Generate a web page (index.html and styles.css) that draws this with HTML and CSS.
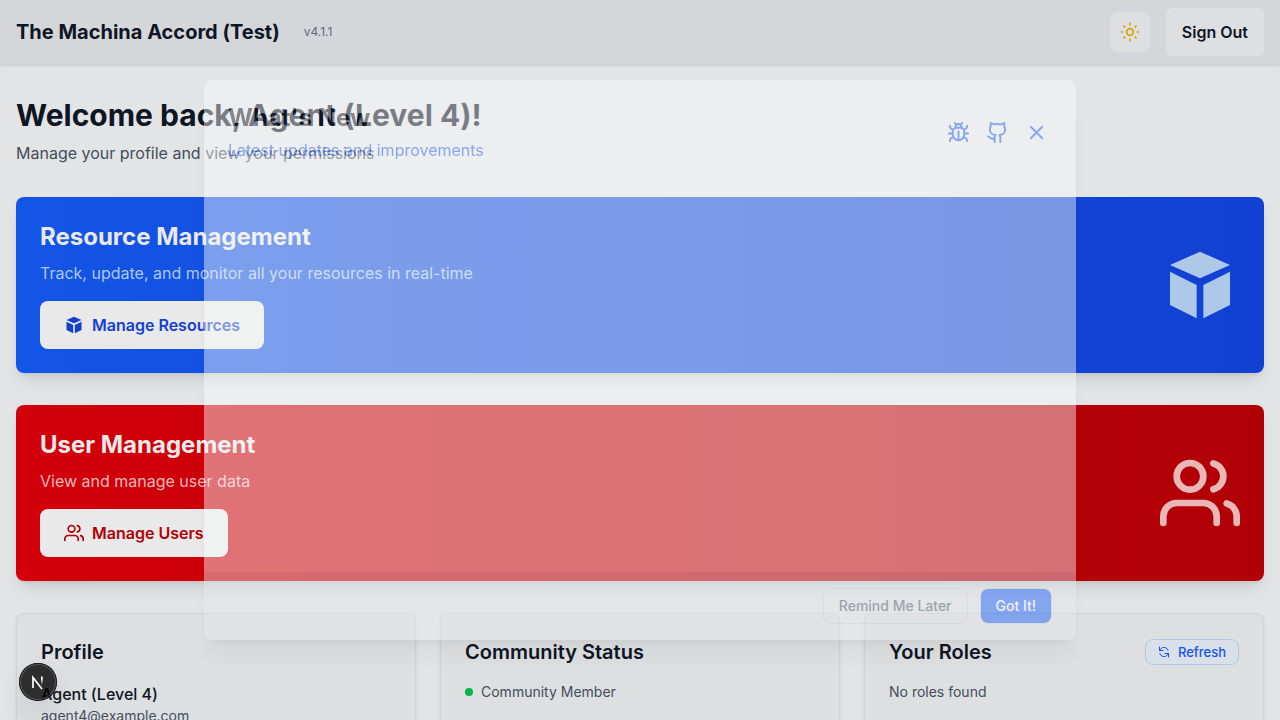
FILE: index.html
```html
<!DOCTYPE html>
<html lang="en">
<head>
<meta charset="utf-8">
<meta name="viewport" content="width=device-width, initial-scale=1">
<title>The Machina Accord (Test)</title>
<link rel="stylesheet" href="styles.css">
</head>
<body>
<header class="topbar">
  <div class="brand">
    <span class="brand-name">The Machina Accord (Test)</span>
    <span class="version">v4.1.1</span>
  </div>
  <div class="topbar-actions">
    <button class="theme-toggle" type="button" aria-label="Toggle theme">
      <svg width="20" height="20" viewBox="0 0 24 24" fill="none" stroke="currentColor" stroke-width="2"><circle cx="12" cy="12" r="4"/><path d="M12 1v3M12 20v3M1 12h3M20 12h3M4.2 4.2l2.2 2.2M17.6 17.6l2.2 2.2M4.2 19.8l2.2-2.2M17.6 6.4l2.2-2.2"/></svg>
    </button>
    <button class="sign-out" type="button">Sign Out</button>
  </div>
</header>

<main class="page">
  <section class="welcome">
    <h1>Welcome back, Agent (Level 4)!</h1>
    <p>Manage your profile and view your permissions</p>
  </section>

  <section class="banner banner-blue">
    <div>
      <h2>Resource Management</h2>
      <p>Track, update, and monitor all your resources in real-time</p>
      <button class="banner-button" type="button">
        <svg width="20" height="20" viewBox="0 0 24 24" fill="currentColor"><path d="M12 2L21 6L12 10L3 6ZM3 8L11 12V22L3 18ZM21 8L13 12V22L21 18Z"/></svg>
        Manage Resources
      </button>
    </div>
    <svg class="banner-icon" viewBox="0 0 24 24" fill="currentColor"><path d="M12 2L21 6L12 10L3 6ZM3 8L11 12V22L3 18ZM21 8L13 12V22L21 18Z"/></svg>
  </section>

  <section class="banner banner-red">
    <div>
      <h2>User Management</h2>
      <p>View and manage user data</p>
      <button class="banner-button" type="button">
        <svg class="line-icon" width="20" height="20" viewBox="0 0 24 24"><path d="M17 21v-2a4 4 0 0 0-4-4H5a4 4 0 0 0-4 4v2"/><circle cx="9" cy="7" r="4"/><path d="M23 21v-2a4 4 0 0 0-3-3.87M16 3.13a4 4 0 0 1 0 7.75"/></svg>
        Manage Users
      </button>
    </div>
    <svg class="banner-icon line-icon" viewBox="0 0 24 24"><path d="M17 21v-2a4 4 0 0 0-4-4H5a4 4 0 0 0-4 4v2"/><circle cx="9" cy="7" r="4"/><path d="M23 21v-2a4 4 0 0 0-3-3.87M16 3.13a4 4 0 0 1 0 7.75"/></svg>
  </section>

  <div class="cards">
    <section class="card">
      <div class="card-head"><h3>Profile</h3></div>
      <p class="profile-name">Agent (Level 4)</p>
      <p class="card-text">agent4@example.com</p>
    </section>
    <section class="card">
      <div class="card-head"><h3>Community Status</h3></div>
      <p class="card-text status"><span class="status-dot"></span>Community Member</p>
    </section>
    <section class="card">
      <div class="card-head">
        <h3>Your Roles</h3>
        <button class="refresh" type="button">
          <svg class="line-icon" width="12" height="12" viewBox="0 0 24 24"><path d="M3 2v7h7M21 22v-7h-7M20.500 9A9 9 0 0 0 5 6L3 9M3.500 15A9 9 0 0 0 19 18l2-3"/></svg>
          Refresh
        </button>
      </div>
      <p class="card-text">No roles found</p>
    </section>
  </div>
</main>

<div class="backdrop"></div>
<div class="modal-layer">
  <div class="modal" role="dialog" aria-labelledby="news-title">
    <header class="modal-head">
      <div>
        <h2 id="news-title">What's New</h2>
        <p>Latest updates and improvements</p>
      </div>
      <div class="modal-tools">
        <button type="button" aria-label="Report a bug"><svg class="line-icon" width="23" height="23" viewBox="0 0 24 24"><path d="m8 2 1.880 1.880M14.120 3.880 16 2M9 7.130v-1a3 3 0 1 1 6 0v1M12 20a6 6 0 0 1-6-6v-3a4 4 0 0 1 4-4h4a4 4 0 0 1 4 4v3a6 6 0 0 1-6 6M12 20v-9M6.530 9C4.600 8.800 3 7.100 3 5M6 13H2M3 21c0-2.100 1.700-3.900 3.800-4M20.970 5c0 2.100-1.600 3.800-3.500 4M22 13h-4M17.200 17c2.100.1 3.800 1.900 3.800 4"/></svg></button>
        <button type="button" aria-label="GitHub"><svg class="line-icon" width="23" height="23" viewBox="0 0 24 24"><path d="M15 22v-4a4.800 4.800 0 0 0-1-3.500c3 0 6-2 6-5.500.08-1.250-.27-2.480-1-3.500.28-1.150.28-2.350 0-3.500 0 0-1 0-3 1.500-2.640-.5-5.360-.5-8 0C6 2 5 2 5 2c-.3 1.150-.3 2.350 0 3.500A5.400 5.400 0 0 0 4 9c0 3.500 3 5.500 6 5.500-.39.490-.68 1.050-.85 1.650S8.930 17.380 9 18v4M9 18c-4.510 2-5-2-7-2"/></svg></button>
        <button type="button" aria-label="Close"><svg class="line-icon" width="23" height="23" viewBox="0 0 24 24"><path d="M18 6 6 18M6 6l12 12"/></svg></button>
      </div>
    </header>
    <div class="modal-body"></div>
    <footer class="modal-foot">
      <button class="later" type="button">Remind Me Later</button>
      <button class="got-it" type="button">Got It!</button>
    </footer>
  </div>
</div>

<button class="dev-badge" type="button" aria-label="Open developer tools">
  <svg width="38" height="38" viewBox="0 0 38 38" fill="none"><defs><linearGradient id="fade" x1="0" y1="0" x2="0" y2="1"><stop offset="0.3" stop-color="#fff"/><stop offset="1" stop-color="#fff" stop-opacity="0"/></linearGradient></defs><path d="M14 25V14.500L23 26" stroke="#fff" stroke-width="1.700"/><rect x="22" y="13.500" width="1.700" height="8.500" fill="url(#fade)"/></svg>
</button>
</body>
</html>
```
FILE: styles.css
```css
* {
  box-sizing: border-box;
  margin: 0;
}

body {
  min-height: 100vh;
  overflow: hidden;
  background: #f9fafb;
  color: #101828;
  font: 16px/24px Inter, sans-serif;
  text-rendering: optimizeSpeed;
}

button {
  border: 0;
  padding: 0;
  font: inherit;
  color: inherit;
  text-rendering: inherit;
  cursor: pointer;
}

svg {
  display: block;
}

.line-icon {
  fill: none;
  stroke: currentColor;
  stroke-width: 2;
  stroke-linecap: round;
  stroke-linejoin: round;
}

.topbar {
  display: flex;
  align-items: center;
  justify-content: space-between;
  padding: 8px 16px;
  background: #e9ebef;
  border-bottom: 1px solid #e5e7eb;
  box-shadow: 0 1px 3px rgba(0, 0, 0, 0.1);
}

.brand,
.topbar-actions {
  display: flex;
  align-items: center;
}

.brand {
  gap: 24px;
}

.brand-name {
  font-size: 20px;
  line-height: 28px;
  font-weight: 700;
}

.version {
  font-size: 12px;
  line-height: 16px;
  color: #6a7282;
}

.topbar-actions {
  gap: 16px;
}

.theme-toggle {
  display: grid;
  place-items: center;
  width: 40px;
  height: 40px;
  border-radius: 8px;
  background: #f3f4f6;
  color: #efb100;
}

.sign-out {
  padding: 12px 16px;
  border-radius: 6px;
  background: #f3f4f6;
  font-weight: 600;
}

.page {
  padding: 32px 16px;
}

.welcome {
  margin-bottom: 32px;
}

.welcome h1 {
  margin-bottom: 8px;
  font-size: 30px;
  line-height: 36px;
}

.welcome p {
  color: #4a5565;
}

.banner {
  display: flex;
  align-items: center;
  justify-content: space-between;
  margin-bottom: 32px;
  padding: 24px;
  border-radius: 8px;
  box-shadow: 0 10px 15px -3px rgba(0, 0, 0, 0.1), 0 4px 6px -4px rgba(0, 0, 0, 0.1);
  color: #fff;
}

.banner-blue {
  background: linear-gradient(to right, #155dfc, #1447e6);
}

.banner-red {
  background: linear-gradient(to right, #e7000b, #c10007);
}

.banner h2 {
  margin-bottom: 8px;
  font-size: 24px;
  line-height: 32px;
}

.banner p {
  margin-bottom: 16px;
}

.banner-blue p,
.banner-blue .banner-icon {
  color: #bedbff;
}

.banner-red p,
.banner-red .banner-icon {
  color: #ffc9c9;
}

.banner-button {
  display: flex;
  align-items: center;
  gap: 8px;
  padding: 12px 24px;
  border-radius: 8px;
  background: #fff;
  font-weight: 600;
}

.banner-blue .banner-button {
  color: #1447e6;
}

.banner-red .banner-button {
  color: #c10007;
}

.banner-icon {
  width: 80px;
  height: 80px;
}

.cards {
  display: grid;
  grid-template-columns: repeat(3, 1fr);
  gap: 24px;
}

.card {
  padding: 24px;
  border: 1px solid #e5e7eb;
  border-radius: 8px;
  background: #f3f4f6;
  box-shadow: 0 1px 3px rgba(0, 0, 0, 0.1);
}

.card-head {
  display: flex;
  align-items: center;
  justify-content: space-between;
  margin-bottom: 16px;
}

.card h3 {
  font-size: 20px;
  line-height: 28px;
  font-weight: 600;
}

.profile-name {
  font-weight: 500;
}

.card-text {
  font-size: 14px;
  line-height: 20px;
  color: #4a5565;
}

.status {
  display: flex;
  align-items: center;
  gap: 8px;
}

.status-dot {
  width: 8px;
  height: 8px;
  border-radius: 50%;
  background: #00c950;
}

.refresh {
  display: flex;
  align-items: center;
  gap: 8px;
  padding: 4px 12px;
  border: 1px solid #bedbff;
  border-radius: 8px;
  background: #eff6ff;
  color: #155dfc;
  font-size: 13px;
  line-height: 16px;
  font-weight: 500;
}

.backdrop {
  position: fixed;
  inset: 0;
  background: rgba(0, 0, 0, 0.088);
}

.modal-layer {
  position: fixed;
  inset: 0;
  display: grid;
  place-items: center;
  padding: 80px 16px;
}

.modal {
  display: flex;
  flex-direction: column;
  width: 100%;
  max-width: 872px;
  height: 100%;
  overflow: hidden;
  border-radius: 8px;
  background: #f9fafb;
  box-shadow: 0 20px 25px -5px rgba(0, 0, 0, 0.1), 0 8px 10px -6px rgba(0, 0, 0, 0.1);
  opacity: 0.455;
}

.modal-head {
  display: flex;
  align-items: center;
  justify-content: space-between;
  padding: 22px 20px 22px 24px;
}

.modal-head h2 {
  margin-bottom: 4px;
  font-size: 24px;
  line-height: 32px;
}

.modal-head p,
.modal-tools {
  color: #155dfc;
}

.modal-tools {
  display: flex;
}

.modal-tools button {
  padding: 8px;
  background: none;
}

.modal-body {
  flex: 1;
}

.modal-foot {
  display: flex;
  justify-content: flex-end;
  gap: 12px;
  padding: 16px 24px;
  background: #e5e7eb;
}

.modal-foot button {
  padding: 8px 15px;
  border: 1px solid #d1d5dc;
  border-radius: 8px;
  font-size: 14px;
  line-height: 18px;
  font-weight: 500;
}

.modal-foot .later {
  background: transparent;
  color: #4a5565;
}

.modal-foot .got-it {
  background: #155dfc;
  color: #fff;
}

.dev-badge {
  position: fixed;
  left: 19px;
  bottom: 19px;
  width: 38px;
  height: 38px;
  border-radius: 50%;
  background: rgba(0, 0, 0, 0.8);
  box-shadow: inset 0 0 0 1px #171717, inset 0 0 0 2px rgba(255, 255, 255, 0.2), 0 16px 32px -8px rgba(0, 0, 0, 0.24);
}
```
